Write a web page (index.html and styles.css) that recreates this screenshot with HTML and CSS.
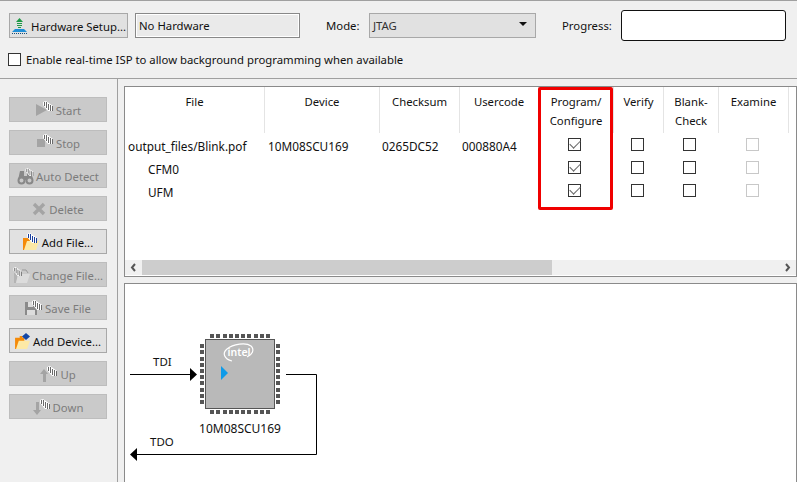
FILE: index.html
```html
<!DOCTYPE html>
<html>

<head>
    <title>Programmer</title>
    <link rel="stylesheet" href="styles.css">
</head>

<body>
    <svg class="defs" width="0" height="0">
        <symbol id="hatch-gray" viewBox="0 0 10 10">
            <path d="M0 1L3 0L10 5V10H5L0 4Z" fill="#fff" />
            <path d="M1.5 1V5M3.5 1V7M5.5 3V9M7.5 4V10M9.5 5V10" stroke="#6a6a6a" stroke-width="1" />
        </symbol>
        <symbol id="hatch-blue" viewBox="0 0 10 10">
            <path d="M0 1L3 0L10 5V10H5L0 4Z" fill="#fff" />
            <path d="M1.5 1V5M3.5 1V7M5.5 3V9M7.5 4V10M9.5 5V10" stroke="#1b3f9c" stroke-width="1" />
        </symbol>
        <symbol id="folder" viewBox="0 0 16 14">
            <path d="M0 2H5V0H8V2H10V6H6L3 14H0Z" fill="#f58a07" />
            <path d="M4 5H16L13 14H1Z" fill="#fde9a6" />
        </symbol>
    </svg>

    <div class="toolbar">
        <div class="toolbar-row">
            <button class="btn btn-hardware">
                <svg class="icon" width="17" height="18" viewBox="0 0 17 18">
                    <path d="M8.5 1L12 5H5Z" fill="#1e9a46" />
                    <path d="M6 6.500H11M6 8.500H11M7 10.500H10" stroke="#1e9a46" stroke-width="1" />
                    <path d="M4 12H13L16 15H1Z" fill="#1f8fd8" />
                    <path d="M1 16.500H16" stroke="#14507e" stroke-width="1" stroke-dasharray="1 1" />
                </svg>
                <span class="btn-text">Hardware Setup...</span>
            </button>
            <div class="hardware-field">No Hardware</div>
            <span class="mode-label">Mode:</span>
            <div class="mode-select">
                <span class="mode-value">JTAG</span>
                <span class="mode-arrow"></span>
            </div>
            <span class="progress-label">Progress:</span>
            <div class="progress-box"></div>
        </div>
        <div class="isp-row">
            <span class="check"></span>
            <span>Enable real-time ISP to allow background programming when available</span>
        </div>
    </div>

    <div class="main">
        <div class="sidebar">
            <button class="btn btn-off">
                <svg class="icon" width="18" height="18" viewBox="0 0 18 18">
                    <path d="M1 3L12 9L1 15Z" fill="#a4a4a4" />
                    <use href="#hatch-gray" x="8" y="0" width="10" height="10" />
                </svg>
                <span class="btn-text">Start</span>
            </button>
            <button class="btn btn-off">
                <svg class="icon" width="17" height="18" viewBox="0 0 17 18">
                    <rect x="1" y="5" width="8" height="8" fill="#a4a4a4" />
                    <use href="#hatch-gray" x="7" y="0" width="10" height="10" />
                </svg>
                <span class="btn-text">Stop</span>
            </button>
            <button class="btn btn-off btn-tight">
                <svg class="icon" width="17" height="18" viewBox="0 0 17 18">
                    <path d="M3 4H7V9H10V4H14L16 13H1Z" fill="#888" />
                    <circle cx="4.500" cy="13.500" r="3" fill="#c8c8c8" stroke="#888" stroke-width="2" />
                    <circle cx="12.500" cy="13.500" r="3" fill="#c8c8c8" stroke="#888" stroke-width="2" />
                    <use href="#hatch-gray" x="8" y="1" width="9" height="8" />
                </svg>
                <span class="btn-text">Auto Detect</span>
            </button>
            <button class="btn btn-off">
                <svg class="icon" width="14" height="14" viewBox="0 0 14 14">
                    <path d="M2 2L12 12M12 2L2 12" stroke="#a4a4a4" stroke-width="3.400" />
                </svg>
                <span class="btn-text">Delete</span>
            </button>
            <button class="btn">
                <svg class="icon" width="16" height="18" viewBox="0 0 16 18">
                    <use href="#folder" x="0" y="3" width="16" height="14" />
                    <use href="#hatch-blue" x="4" y="0" width="10" height="10" />
                </svg>
                <span class="btn-text">Add File...</span>
            </button>
            <button class="btn btn-off btn-tight">
                <svg class="icon" width="17" height="18" viewBox="0 0 17 18">
                    <path d="M1 6H9V9H5L3 17H1Z" fill="#b4b4b4" />
                    <path d="M5 8H17L14 17H3Z" fill="#dcdcdc" />
                    <use href="#hatch-gray" x="0" y="1" width="9" height="9" />
                    <path d="M9 4H13L15 7" stroke="#999" fill="none" />
                </svg>
                <span class="btn-text">Change File...</span>
            </button>
            <button class="btn btn-off">
                <svg class="icon" width="17" height="18" viewBox="0 0 17 18">
                    <path d="M0 3H12V16H0Z" fill="#8a8a8a" />
                    <rect x="3" y="3" width="5" height="5" fill="#ddd" />
                    <rect x="2" y="11" width="8" height="5" fill="#ddd" />
                    <use href="#hatch-gray" x="7" y="1" width="10" height="10" />
                </svg>
                <span class="btn-text">Save File</span>
            </button>
            <button class="btn btn-tight">
                <svg class="icon" width="16" height="18" viewBox="0 0 16 18">
                    <use href="#folder" x="0" y="4" width="15" height="13" />
                    <path d="M11 1L15 4.500L11 8L7 4.500Z" fill="#1447a6" />
                </svg>
                <span class="btn-text">Add Device...</span>
            </button>
            <button class="btn btn-off">
                <svg class="icon" width="17" height="18" viewBox="0 0 17 18">
                    <path d="M4 4L8 9H6V17H3V9H0Z" fill="#a4a4a4" />
                    <use href="#hatch-gray" x="7" y="1" width="10" height="10" />
                </svg>
                <span class="btn-text">Up</span>
            </button>
            <button class="btn btn-off">
                <svg class="icon" width="17" height="18" viewBox="0 0 17 18">
                    <path d="M3 4H6V12H8L4 17L0 12H3Z" fill="#a4a4a4" />
                    <use href="#hatch-gray" x="7" y="1" width="10" height="10" />
                </svg>
                <span class="btn-text">Down</span>
            </button>
        </div>

        <div class="content">
            <div class="panel panel-table">
                <div class="grid">
                    <div class="head">File</div>
                    <div class="head">Device</div>
                    <div class="head">Checksum</div>
                    <div class="head">Usercode</div>
                    <div class="head">Program/<br>Configure</div>
                    <div class="head">Verify</div>
                    <div class="head">Blank-<br>Check</div>
                    <div class="head">Examine</div>
                    <div class="head head-end"></div>

                    <div class="cell cell-file">output_files/Blink.pof</div>
                    <div class="cell cell-device">10M08SCU169</div>
                    <div class="cell cell-sum">0265DC52</div>
                    <div class="cell cell-sum">000880A4</div>
                    <div class="cell cell-check"><span class="check check-on"></span></div>
                    <div class="cell cell-check"><span class="check"></span></div>
                    <div class="cell cell-check"><span class="check"></span></div>
                    <div class="cell cell-check"><span class="check check-off"></span></div>
                    <div class="cell"></div>

                    <div class="cell cell-sub">CFM0</div>
                    <div class="cell"></div>
                    <div class="cell"></div>
                    <div class="cell"></div>
                    <div class="cell cell-check"><span class="check check-on"></span></div>
                    <div class="cell cell-check"><span class="check"></span></div>
                    <div class="cell cell-check"><span class="check"></span></div>
                    <div class="cell cell-check"><span class="check check-off"></span></div>
                    <div class="cell"></div>

                    <div class="cell cell-sub">UFM</div>
                    <div class="cell"></div>
                    <div class="cell"></div>
                    <div class="cell"></div>
                    <div class="cell cell-check"><span class="check check-on"></span></div>
                    <div class="cell cell-check"><span class="check"></span></div>
                    <div class="cell cell-check"><span class="check"></span></div>
                    <div class="cell cell-check"><span class="check check-off"></span></div>
                    <div class="cell"></div>
                </div>
                <div class="scrollbar">
                    <svg class="scroll-arrow" width="17" height="15" viewBox="0 0 17 15">
                        <path d="M10 4L7 7.500L10 11" fill="none" stroke="#555" stroke-width="2" />
                    </svg>
                    <div class="scroll-track">
                        <div class="scroll-thumb"></div>
                    </div>
                    <svg class="scroll-arrow" width="17" height="15" viewBox="0 0 17 15">
                        <path d="M7 4L10 7.500L7 11" fill="none" stroke="#555" stroke-width="2" />
                    </svg>
                </div>
                <div class="highlight"></div>
            </div>

            <div class="panel panel-chain">
                <svg class="chain" width="671" height="198" viewBox="125 284 671 198">
                    <g fill="#555">
                        <path d="M210 334h4v4h-4zM216 334h4v4h-4zM223 334h4v4h-4zM229 334h4v4h-4zM235 334h4v4h-4zM241 334h4v4h-4zM247 334h4v4h-4zM254 334h4v4h-4zM260 334h4v4h-4zM266 334h4v4h-4z" />
                        <path d="M210 410h4v4h-4zM216 410h4v4h-4zM223 410h4v4h-4zM229 410h4v4h-4zM235 410h4v4h-4zM241 410h4v4h-4zM247 410h4v4h-4zM254 410h4v4h-4zM260 410h4v4h-4zM266 410h4v4h-4z" />
                        <path d="M200 344h4v4h-4zM200 350h4v4h-4zM200 357h4v4h-4zM200 363h4v4h-4zM200 369h4v4h-4zM200 375h4v4h-4zM200 381h4v4h-4zM200 388h4v4h-4zM200 394h4v4h-4zM200 400h4v4h-4z" />
                        <path d="M276 344h4v4h-4zM276 350h4v4h-4zM276 357h4v4h-4zM276 363h4v4h-4zM276 369h4v4h-4zM276 375h4v4h-4zM276 381h4v4h-4zM276 388h4v4h-4zM276 394h4v4h-4zM276 400h4v4h-4z" />
                    </g>
                    <rect x="205.500" y="339.500" width="69" height="69" fill="#b9b9b9" stroke="#555" />
                    <path d="M232 361C224 359 222 353 227 349C233 344 246 342 251 346C255 350 252 355 247 357" fill="none" stroke="#fff" stroke-width="1.200" />
                    <text class="chip-logo" x="239" y="356" text-anchor="middle">intel</text>
                    <path d="M221 366L228 373L221 380Z" fill="#0f9be8" />

                    <path d="M130 374.500H191" stroke="#000" fill="none" />
                    <path d="M190 368L197 374.500L190 381Z" fill="#000" />
                    <path d="M286 374.500H316.500V454.500H135" stroke="#000" fill="none" />
                    <path d="M137 448L130 454.500L137 461Z" fill="#000" />

                    <text class="chain-label" x="153" y="366">TDI</text>
                    <text class="chain-label" x="150" y="446">TDO</text>
                    <text class="chain-label chain-label-chip" x="240" y="433" text-anchor="middle">10M08SCU169</text>
                </svg>
            </div>
        </div>
    </div>
</body>

</html>
```
FILE: styles.css
```css
* {
    box-sizing: border-box;
}

html,
body {
    height: 100%;
}

body {
    margin: 0;
    overflow: hidden;
    font-family: "Noto Sans", sans-serif;
    font-size: 11.33px;
    color: #111;
    background-color: #f0f0f0;
    display: flex;
    flex-direction: column;
}

.defs {
    position: absolute;
}

.toolbar {
    height: 79px;
    flex: none;
    border-top: 1px solid #a0a0a0;
    border-bottom: 1px solid #a0a0a0;
    padding: 9px 0 0 9px;
}

.toolbar-row {
    display: flex;
    align-items: center;
    height: 31px;
}

.btn {
    display: flex;
    align-items: center;
    justify-content: center;
    gap: 3px;
    height: 25px;
    padding: 0;
    border: 1px solid #a8a8a8;
    background-color: #e1e1e1;
    font-family: inherit;
    font-size: inherit;
    color: #111;
}

.btn-text {
    position: relative;
    top: 1px;
}

.btn-hardware {
    width: 119px;
}

.btn-off {
    background-color: #cacaca;
    border-color: #bdbdbd;
    color: #7c7c7c;
}

.btn-tight {
    gap: 2px;
}

.icon {
    flex: none;
}

.hardware-field {
    width: 165px;
    height: 25px;
    margin-left: 7px;
    padding-left: 3px;
    line-height: 23px;
    border: 1px solid #888;
    box-shadow: inset 0 0 0 1px #fff;
    background-color: #eaeaea;
}

.mode-label {
    margin-left: 26px;
    width: 43px;
}

.mode-select {
    display: flex;
    align-items: center;
    justify-content: space-between;
    width: 167px;
    height: 25px;
    padding: 0 3px 0 3px;
    border: 1px solid #a8a8a8;
    background-color: #e1e1e1;
}

.mode-value {
    color: #333;
}

.mode-arrow {
    margin: 0 5px 3px 0;
    border-left: 4px solid transparent;
    border-right: 4px solid transparent;
    border-top: 4px solid #111;
}

.progress-label {
    margin-left: 26px;
    width: 59px;
}

.progress-box {
    width: 165px;
    height: 31px;
    border: 1px solid #111;
    border-radius: 3px;
    background-color: #fff;
}

.isp-row {
    display: flex;
    align-items: center;
    gap: 5px;
    margin: 11px 0 0 -1px;
    height: 14px;
}

.check {
    display: block;
    flex: none;
    width: 13px;
    height: 13px;
    border: 1px solid #333;
    background-color: #fff;
}

.check-off {
    border-color: #c8c8c8;
}

.check-on::after {
    content: "";
    display: block;
    width: 9px;
    height: 5px;
    margin: 1px 0 0 1px;
    border-left: 1.5px solid #666;
    border-bottom: 1.5px solid #666;
    transform: rotate(-45deg);
}

.main {
    flex: 1;
    min-height: 0;
    display: flex;
}

.sidebar {
    width: 118px;
    flex: none;
    display: flex;
    flex-direction: column;
    gap: 8px;
    padding: 18px 0 0 9px;
    border-right: 1px solid #a0a0a0;
}

.sidebar .btn {
    width: 98px;
}

.content {
    flex: 1;
    min-width: 0;
    display: flex;
    flex-direction: column;
    gap: 6px;
    padding: 7px 0 0 6px;
}

.panel {
    position: relative;
    border: 1px solid #8a8a8a;
    background-color: #fff;
}

.panel-table {
    height: 191px;
    flex: none;
    display: flex;
    flex-direction: column;
}

.panel-chain {
    flex: 1;
    min-height: 0;
    border-bottom: none;
}

.grid {
    flex: 1;
    display: grid;
    grid-template-columns: 140px 115px 80px 79px 75px 50px 55px 70px 7px;
    grid-auto-rows: 23px;
    grid-template-rows: 46px;
}

.head {
    border-right: 1px solid #e4e4e4;
    padding-top: 5px;
    line-height: 19px;
    text-align: center;
}

.head-end {
    border-right: none;
}

.cell {
    display: flex;
    align-items: center;
    padding: 2px 0 0 2px;
    font-size: 11.8px;
    white-space: nowrap;
}

.cell-file,
.cell-device {
    padding-left: 3px;
}

.cell-sub {
    padding-left: 23px;
}

.cell-check {
    justify-content: center;
    padding: 0 4px 0 0;
}

.scrollbar {
    display: flex;
    height: 15px;
    margin-bottom: 1px;
    background-color: #f0f0f0;
}

.scroll-arrow {
    flex: none;
}

.scroll-track {
    flex: 1;
}

.scroll-thumb {
    width: 410px;
    height: 15px;
    background-color: #cdcdcd;
}

.highlight {
    position: absolute;
    left: 413px;
    top: 0;
    width: 75px;
    height: 123px;
    border: 3px solid #f00000;
    border-radius: 2px;
}

.chain {
    display: block;
}

.chain-label {
    font-family: "Noto Sans", sans-serif;
    font-size: 11.5px;
    fill: #111;
}

.chain-label-chip {
    font-size: 12px;
}

.chip-logo {
    font-family: "Noto Sans", sans-serif;
    font-size: 10.5px;
    font-weight: 600;
    fill: #fff;
}
```
